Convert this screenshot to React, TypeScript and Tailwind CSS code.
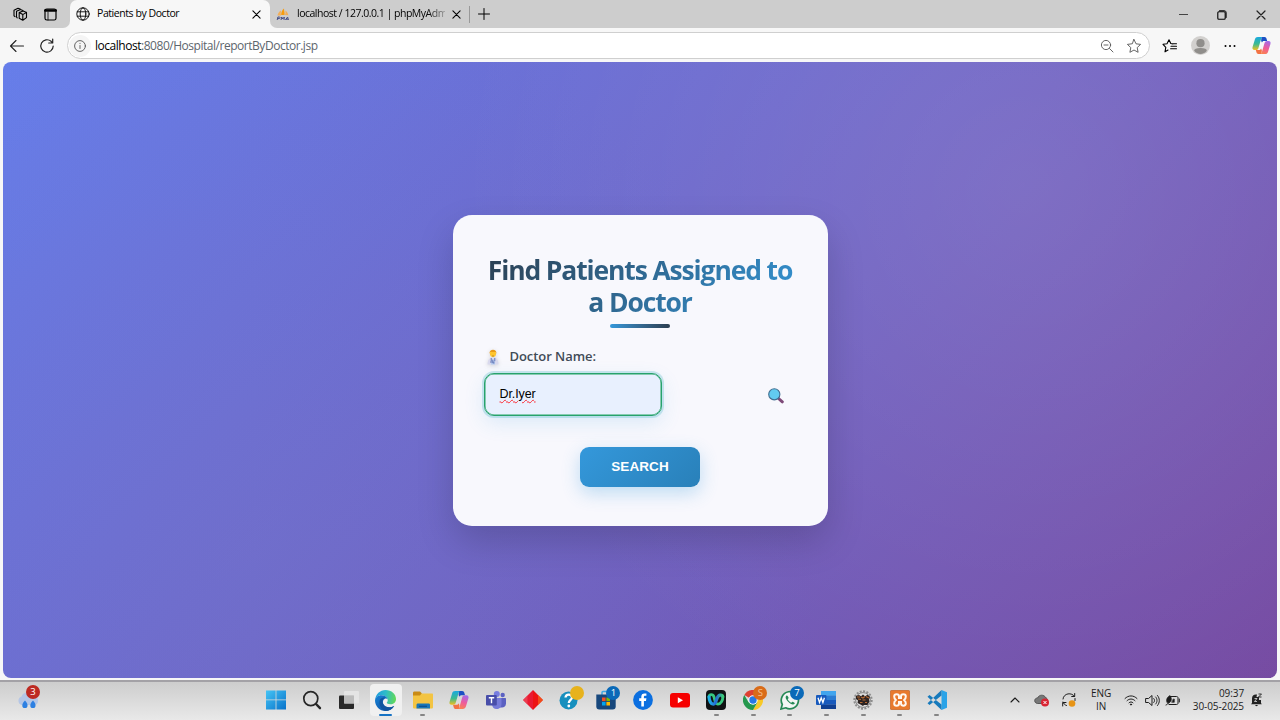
import React, { type ReactNode } from "react";

const stroke = { fill: "none", stroke: "currentColor", strokeLinecap: "round", strokeLinejoin: "round" } as const;

function CopilotLogo({ className }: { className: string }) {
  return (
    <svg viewBox="0 0 20 20" className={className}>
      <defs>
        <linearGradient id="cpA" x1="0" y1="0" x2="0" y2="1">
          <stop offset="0" stopColor="#18a8e0" />
          <stop offset=".55" stopColor="#3dbb8f" />
          <stop offset="1" stopColor="#f2c01d" />
        </linearGradient>
        <linearGradient id="cpB" x1=".6" y1="0" x2=".3" y2="1">
          <stop offset="0" stopColor="#a66be8" />
          <stop offset=".5" stopColor="#ee5b9c" />
          <stop offset="1" stopColor="#fb8350" />
        </linearGradient>
      </defs>
      <path d="M10 1h3.200c1.200 0 1.800.8 2.100 1.800L16 5.200h-3.400c-1.200 0-1.800.6-2.100 1.600L9.600 5z" fill="#1c50c4" />
      <path d="M10 19H6.800c-1.200 0-1.800-.8-2.100-1.800L4 14.800h3.400c1.200 0 1.800-.6 2.100-1.600l.9 1.800z" fill="#f37344" />
      <path d="M6.200 1h5.300c-1 0-1.500.7-1.800 1.600L6.800 12.600c-.4 1.400-1.100 2.200-2.600 2.200H2.600C.8 14.800.1 13.400.6 11.700L3.100 3.400C3.600 1.800 4.500 1 6.200 1z" fill="url(#cpA)" />
      <path d="M13.800 19H8.500c1 0 1.500-.7 1.800-1.600l2.900-10c.4-1.400 1.100-2.200 2.600-2.200h1.600c1.800 0 2.500 1.400 2 3.100l-2.500 8.300c-.5 1.600-1.400 2.400-3.100 2.400z" fill="url(#cpB)" />
    </svg>
  );
}

function CloseIcon({ className }: { className: string }) {
  return (
    <svg viewBox="0 0 10 10" className={className} {...stroke} strokeWidth="1.200">
      <path d="M1 1l8 8M9 1L1 9" />
    </svg>
  );
}

function TabStrip() {
  return (
    <header className="flex h-7 shrink-0 items-center bg-[#f7f7f7] text-black">
      <div className="flex h-7 w-[70px] items-center rounded-br-[7px] bg-[#cdcdcd] pl-[13px]">
        <svg viewBox="0 0 15 15" className="size-[15px]" {...stroke} strokeWidth="1.100">
          <path d="M6.200 5.600l4-1.700 3.300 1.500v5.200l-3.700 2.700-3.600-2zM6.200 5.600l3.600 2 3.700-2.200M9.800 7.600v5.700" />
          <path d="M4.200 10.800L3.500 10V4.300l4-1.800 2.300.9M2 9.600L1 8.800V3.200l4-1.900 2.200.8" />
        </svg>
        <svg viewBox="0 0 13 13" className="ml-4 size-[13px]" {...stroke} strokeWidth="1.200">
          <rect x="1" y="1" width="11" height="11" rx="1.800" />
          <path d="M1.200 2.500h10.600" strokeWidth="2.400" />
          <path d="M4 4v8" strokeWidth=".8" />
        </svg>
      </div>
      <div className="h-7 w-[200px] bg-[#cdcdcd]">
        <div className="flex h-7 items-center rounded-t-[7px] bg-[#f7f7f7]">
          <svg viewBox="0 0 14 14" className="ml-[6px] size-[14px]" {...stroke} strokeWidth=".9">
            <circle cx="7" cy="7" r="6.200" />
            <ellipse cx="7" cy="7" rx="2.800" ry="6.200" />
            <path d="M1.300 4.800h11.400M1.300 9.200h11.400" />
          </svg>
          <span className="ml-[7px] w-[155px] whitespace-nowrap text-[10.500px] tracking-[-0.44px]">Patients by Doctor</span>
          <CloseIcon className="size-[9px]" />
        </div>
      </div>
      <div className="flex h-7 flex-1 items-center rounded-bl-[7px] bg-[#cdcdcd] pl-[6px]">
        <svg viewBox="0 0 14 14" className="size-[14px]">
          <path d="M5.200 8C5 5.500 6 3 8 1.500c0 2.500 1 4.500.5 6.500z" fill="#f89c0e" />
          <path d="M1.500 8.500C2 6 3.300 4.500 5 3.500c-.4 2-.2 3.400 0 5zM9 8c.6-1.500.6-3 .4-4.500 1.800 1.200 2.600 3 3 4.700z" fill="#f3ae58" />
          <path d="M1.200 13l.7-3h1.400c1.200 0 1 1.600-.3 1.600H1.600M5 13l.7-3 1 2 1.600-2L8 13M9.400 13l2.200-3 .8 3M10 12.200h2.200" fill="none" stroke="#444d86" strokeWidth="1" />
        </svg>
        <span className="ml-[7px] w-[148px] whitespace-nowrap bg-linear-to-r from-black from-85% to-[#999] bg-clip-text text-[10.500px] tracking-[-0.49px] text-transparent">localhost / 127.0.0.1 | phpMyAdm</span>
        <CloseIcon className="ml-[7px] size-[9px]" />
        <div className="ml-[8px] h-[17px] w-px bg-[#999]" />
        <svg viewBox="0 0 12 12" className="ml-[8px] size-3" {...stroke} strokeWidth="1">
          <path d="M6 .5v11M.5 6h11" />
        </svg>
        <div className="ml-auto flex items-center pr-[14px]">
          <div className="h-px w-[9px] bg-[#444]" />
          <svg viewBox="0 0 10 10" className="ml-[29px] mt-px size-[10px]" {...stroke} strokeWidth="1.100">
            <rect x=".8" y="1.800" width="7.400" height="7.400" rx="1" />
            <path d="M2.500.7h4.700c1.200 0 2 .8 2 2v4.800" strokeWidth=".9" />
          </svg>
          <CloseIcon className="ml-[29px] mt-px size-[10px] text-[#222]" />
        </div>
      </div>
    </header>
  );
}

const starPath = "M8 1.500l2 4.300 4.600.6-3.400 3.200.9 4.700L8 12l-4.100 2.300.9-4.700L1.400 6.400 6 5.800z";

function AddressBar() {
  return (
    <div className="flex h-[34px] shrink-0 items-center bg-[#f7f7f7] pt-px pl-[9px] text-[#222]">
      <svg viewBox="0 0 16 14" className="h-[14px] w-4" {...stroke} strokeWidth="1.100">
        <path d="M14.500 7H1.500M7 1.500L1.500 7 7 12.500" />
      </svg>
      <svg viewBox="0 0 16 16" className="ml-[14px] size-4" {...stroke} strokeWidth="1.200">
        <path d="M14.200 8a6.200 6.200 0 1 1-2.100-4.700l1.500 1.500M13.700 1v4h-4" />
      </svg>
      <div className="ml-[12px] flex h-[27px] w-[1083px] items-center rounded-full border border-[#cfcfcf] bg-white pl-px">
        <div className="flex size-[22px] items-center justify-center rounded-full bg-[#f5f5f5]">
          <svg viewBox="0 0 12 12" className="size-3 text-[#555]" {...stroke} strokeWidth=".9">
            <circle cx="6" cy="6" r="5.400" />
            <path d="M6 5.500v3M6 3.300v.2" />
          </svg>
        </div>
        <span className="ml-[4px] whitespace-nowrap text-[12px] tracking-[-0.47px] text-[#5d666d]">
          <span className="text-black">localhost</span>:8080/Hospital/reportByDoctor.jsp
        </span>
        <svg viewBox="0 0 14 14" className="ml-auto size-[14px] text-[#555]" {...stroke} strokeWidth=".9">
          <circle cx="6" cy="6" r="4.600" />
          <path d="M9.500 9.500L13 13M4 6h4" />
        </svg>
        <svg viewBox="0 0 16 16" className="ml-[12px] mr-[7px] size-4 text-[#555]" {...stroke} strokeWidth=".9">
          <path d={starPath} />
        </svg>
      </div>
      <svg viewBox="0 0 16 16" className="ml-[12px] size-4 text-black" {...stroke} strokeWidth="1.100">
        <path d="M6 12L3 13.800l.8-4.500L1 6.300l4-.6 2-4 1.800 3.800L11 6M9 8.300h5.500M8.600 10.800h5.900M10 5.800h4.500" />
      </svg>
      <svg viewBox="0 0 18 18" className="ml-[13px] size-[19px]">
        <circle cx="9" cy="9" r="9" fill="#d2d0ce" />
        <circle cx="9" cy="6.800" r="3.900" fill="#908e8b" />
        <path d="M3 14c0-1.800 2-2.600 6-2.600s6 .8 6 2.600c-1.500 2-3.500 3-6 3s-4.500-1-6-3z" fill="#908e8b" />
      </svg>
      <svg viewBox="0 0 12 4" className="ml-[14px] h-1 w-3 fill-black">
        <circle cx="1.500" cy="2" r="1" /><circle cx="6" cy="2" r="1" /><circle cx="10.500" cy="2" r="1" />
      </svg>
      <CopilotLogo className="ml-[16px] size-[19px]" />
    </div>
  );
}

function DoctorIcon() {
  return (
    <svg viewBox="0 0 12 16" className="h-4 w-3 drop-shadow-sm">
      <path d="M.5 15.500c0-4 1.500-7 5.500-7s5.500 3 5.500 7z" fill="#d9d9ee" />
      <path d="M4 8.500l2 3 2-3v7H4z" fill="#b7cdf0" />
      <path d="M4.200 9v3.200M7.800 9v3.200M3 13h2.400M6.800 12.600v2M5.800 10.600v3.600" fill="none" stroke="#5665a8" strokeWidth=".8" />
      <circle cx="6" cy="4.800" r="3.100" fill="#ffc52d" />
      <path d="M2.600 4.800C2.200 2 4 .8 6 .8s3.800 1.200 3.400 4L8.600 3H3.400z" fill="#e99a18" />
      <path d="M5 7h2" stroke="#9a6518" strokeWidth=".6" />
    </svg>
  );
}

function SearchPanel() {
  return (
    <section className="mt-px flex h-[311px] w-[375px] flex-col items-center rounded-[19px] bg-[#f8f8fd] px-[30px] pt-[39px] shadow-[0_16px_36px_rgba(0,0,0,0.17)]">
      <h1 className="w-[315px] whitespace-nowrap bg-[linear-gradient(135deg,#2c3e50,#3498db)] bg-clip-text text-center text-[26.500px] leading-8 font-bold tracking-[-1.140px] text-transparent">
        Find Patients Assigned to<br />a Doctor
      </h1>
      <div className="mt-[6px] h-[3.500px] w-[60px] rounded-sm bg-linear-to-r from-[#3498db] to-[#2c3e50]" />
      <div className="mt-[19.500px] flex h-5 w-full items-center pl-[4px] text-[13px] font-semibold text-[#414b57]">
        <DoctorIcon />
        <label htmlFor="doctor" className="ml-[11px] tracking-[-0.06px]">Doctor Name:</label>
      </div>
      <div className="mt-[6px] flex w-full items-center pl-px">
        <div id="doctor" className="flex h-[43px] w-[178px] items-center rounded-[10px] border border-[#27a26c] bg-[#e8f0fe] px-[15px] font-['Liberation_Sans',sans-serif] text-[12.500px] tracking-[-0.1px] text-black shadow-[inset_0_0_0_0.5px_#27a567,0_0_0_2px_rgba(52,170,190,0.24),0_7px_20px_rgba(52,152,219,0.15)]">
          <span className="underline decoration-red-500 decoration-wavy decoration-[0.8px] underline-offset-[1px]">Dr.Iyer</span>
        </div>
        <svg viewBox="0 0 16 16" className="mt-[3px] ml-[106px] size-4">
          <path d="M10 10l4.300 3.800" stroke="#7e4a78" strokeWidth="3" strokeLinecap="round" />
          <circle cx="6.300" cy="6.300" r="5.600" fill="#62cbf0" stroke="#436f91" strokeWidth="1.100" />
        </svg>
      </div>
      <button className="mt-[31px] h-10 w-[120px] rounded-[9px] bg-[linear-gradient(135deg,#3498db,#2980b9)] font-['Liberation_Sans',sans-serif] text-[13.500px] font-bold tracking-[0.1px] text-white shadow-[0_6px_18px_rgba(52,152,219,0.3)]">SEARCH</button>
    </section>
  );
}

function Badge({ className, children }: { className: string; children?: ReactNode }) {
  return <span className={"absolute flex size-[14px] items-center justify-center rounded-full text-[9.500px] leading-none " + className}>{children}</span>;
}

const big = "size-5";

const apps: { name: string; icon: ReactNode; badge?: ReactNode; state?: "open" | "active" }[] = [
  {
    name: "start",
    icon: (
      <svg viewBox="0 0 20 20" className={big}>
        <defs><linearGradient id="win" x1="0" y1="0" x2="1" y2="1"><stop stopColor="#45c4f5" /><stop offset="1" stopColor="#0872ca" /></linearGradient></defs>
        <path d="M0 .5h9.600v9H0zM10.400.5H20v9h-9.600zM0 10.300h9.600v9.200H0zM10.400 10.300H20v9.200h-9.600z" fill="url(#win)" />
      </svg>
    ),
  },
  {
    name: "search",
    icon: (
      <svg viewBox="0 0 20 20" className={big} fill="none" stroke="#262626" strokeLinecap="round">
        <circle cx="8.800" cy="8.600" r="7" strokeWidth="1.700" /><path d="M14 14l4 4.200" strokeWidth="2.400" />
      </svg>
    ),
  },
  {
    name: "tasks",
    icon: (
      <svg viewBox="0 0 20 20" className={big}>
        <rect x="0" y="5.500" width="15" height="13.500" rx="1" fill="#292929" /><rect x="5" y="1" width="15" height="12.500" rx="1" fill="#e6e6e6" opacity=".85" /><rect x="5" y="5.500" width="10" height="8" fill="#bbb" />
      </svg>
    ),
  },
  {
    name: "edge",
    state: "active",
    icon: (
      <svg viewBox="0 0 20 20" className="size-[21px]">
        <defs>
          <linearGradient id="edT" x1="0" y1=".3" x2="1" y2=".4"><stop stopColor="#209be0" /><stop offset=".5" stopColor="#2ebcc8" /><stop offset="1" stopColor="#62d957" /></linearGradient>
          <linearGradient id="edB" x1="0" y1="0" x2="1" y2="1"><stop stopColor="#1783d6" /><stop offset="1" stopColor="#0c4a9d" /></linearGradient>
        </defs>
        <path d="M.1 9.500C.5 4 4.800 0 10 0c5.800 0 10 4 10 8.500 0 3.200-2.500 5-5.300 5-2.300 0-3.700-.8-3.500-1.600.8-.7 1-1.500.9-2.400C11.800 6.500 9 5 6 5 3 5 .8 7 .1 9.500z" fill="url(#edT)" />
        <path d="M0 10C.4 7 3 5 6 5c3 0 5.500 1.400 6 3.800C11 7.500 9 8 8 9.500c-2 4 2.500 8 7 7 1.300-.2 2.500-.8 3.300-1.200C16.600 18.300 13.500 20 10 20 4.500 20 0 15.500 0 10z" fill="url(#edB)" />
        <path d="M4.500 10C5.300 7.500 8 6.800 10 7.400 7.300 8 6.500 11 8 13.600c1.600 2.600 5.500 4 10.300 1.700-2 3.500-5 4.700-8.300 4.700-4.500-1.800-6.500-6-5.500-10z" fill="#10549f" />
      </svg>
    ),
  },
  {
    name: "files",
    state: "open",
    icon: (
      <svg viewBox="0 0 20 20" className={big}>
        <path d="M0 3c0-1 .5-1.500 1.500-1.500H7L9 3.500V7H0z" fill="#c98b16" />
        <path d="M0 5.500h7l1.500-2h10.500c.7 0 1 .4 1 1V17c0 1-.5 1.500-1.500 1.500h-17C.5 18.500 0 18 0 17z" fill="#f3c443" />
        <path d="M3.500 18.500V15c0-1 .6-1.500 1.500-1.500h10.500c1 0 1.500.5 1.500 1.500v3.500z" fill="#1876b9" /><path d="M6 16.300h8" stroke="#0d4f8d" strokeWidth="1.200" />
      </svg>
    ),
  },
  { name: "copilot", icon: <CopilotLogo className={big} /> },
  {
    name: "teams",
    icon: (
      <svg viewBox="0 0 20 20" className={big}>
        <circle cx="16.700" cy="5" r="2.200" fill="#5b61c2" /><circle cx="10.800" cy="4" r="3" fill="#777de0" />
        <path d="M13 8h6c.6 0 1 .4 1 1v4.500c0 2.500-2 4-4 4H13z" fill="#5b61c2" /><path d="M6 8h9.500v6c0 3-2.200 5-4.900 5S6 17 6 14z" fill="#767bd9" />
        <rect x="0" y="5" width="10.800" height="10.500" rx="1" fill="#484ea9" /><path d="M2.800 7.800h5.400M5.500 8v5.200" stroke="#fff" strokeWidth="1.400" />
      </svg>
    ),
  },
  {
    name: "diamond",
    icon: (
      <svg viewBox="0 0 20 20" className={big}>
        <path d="M10 0L0 10l10 10z" fill="#e91b32" /><path d="M10 0l10 10-10 10z" fill="#ed1313" /><path d="M15 5l5 5-5 5z" fill="#f35b1b" opacity=".8" /><path d="M4.500 5.500L0 10l4.500 4.500z" fill="#ed4c5d" opacity=".7" />
      </svg>
    ),
  },
  {
    name: "help",
    badge: <Badge className="top-[4px] right-[4px] bg-[#e7b21c]" />,
    icon: (
      <svg viewBox="0 0 20 20" className={big}>
        <circle cx="9.500" cy="10.500" r="9" fill="#168fbe" /><path d="M6.500 7.500c.4-4 6.500-3.500 6.500 0 0 2.300-3.200 2.500-3.200 5.500" fill="none" stroke="#fff" strokeWidth="2.300" /><circle cx="9.800" cy="16" r="1.400" fill="#fff" />
      </svg>
    ),
  },
  {
    name: "store",
    badge: <Badge className="top-[4px] right-[4px] bg-[#0a69b8] text-white">1</Badge>,
    icon: (
      <svg viewBox="0 0 20 20" className={big}>
        <path d="M6 5V2.500c0-.7.300-1 1-1h6c.7 0 1 .3 1 1V5" fill="none" stroke="#3da9e3" strokeWidth="1.500" />
        <path d="M.3 4.500h19.400v12c0 2-1 3-3 3H3.300c-2 0-3-1-3-3z" fill="#17477c" />
        <path d="M6 7.500h3.600v3.600H6z" fill="#f25022" /><path d="M10.400 7.500H14v3.600h-3.600z" fill="#7fba00" /><path d="M6 11.900h3.600v3.600H6z" fill="#00a4ef" /><path d="M10.400 11.900H14v3.600h-3.600z" fill="#ffb900" />
      </svg>
    ),
  },
  {
    name: "facebook",
    icon: (
      <svg viewBox="0 0 20 20" className={big}>
        <circle cx="10" cy="10" r="9.900" fill="#0b6fe0" /><path d="M8.300 16.500v-5.600H6.200V8.300h2.100V6.800c0-2.200 1.100-3.400 3.200-3.400.8 0 1.500.1 1.900.2v2.100h-1.200c-1 0-1.300.5-1.300 1.200v1.400h2.500l-.4 2.600h-2.100v5.600z" fill="#fff" />
      </svg>
    ),
  },
  {
    name: "youtube",
    icon: (
      <svg viewBox="0 0 20 20" className={big}><rect x="0" y="3" width="20" height="14.500" rx="3" fill="#f60000" /><path d="M7.800 7.300v6l5.200-3z" fill="#fff" /></svg>
    ),
  },
  {
    name: "webex",
    state: "open",
    icon: (
      <svg viewBox="0 0 20 20" className={big} fill="none" strokeLinecap="round">
        <defs><linearGradient id="wbx" x1="0" y1="0" x2="1" y2="0"><stop stopColor="#1fb6e8" /><stop offset=".5" stopColor="#2468d8" /><stop offset="1" stopColor="#3ccc78" /></linearGradient></defs>
        <rect width="20" height="20" rx="4" fill="#101214" />
        <path d="M3 6.800C3.500 4 7 4 8 7c.9 3 .8 7 3.800 7.200 3 .2 5.200-4 5-7.400" stroke="#38c87f" strokeWidth="2.800" />
        <path d="M3 6.800c.2 4 2 7.600 4.600 7.400 3.200-.3 2.400-8.400 6.300-9 1.500-.2 2.700.4 2.900 1.600" stroke="url(#wbx)" strokeWidth="3.200" />
      </svg>
    ),
  },
  {
    name: "chrome",
    state: "open",
    badge: <Badge className="top-[4px] right-[4px] bg-[#d96b19] text-[#f8c08f]">S</Badge>,
    icon: (
      <svg viewBox="0 0 20 20" className={big}>
        <path d="M10 10L1.300 5a10 10 0 0 1 17.400 0z" fill="#de4032" /><path d="M10 10H18.700V5A10 10 0 0 1 10 20l4.300-7.500z" fill="#f8c928" /><path d="M10 10l4.300 2.500L10 20A10 10 0 0 1 1.300 5l4.400 7.500z" fill="#24974d" />
        <circle cx="10" cy="10" r="4.700" fill="#fff" /><circle cx="10" cy="10" r="3.700" fill="#2678e4" />
      </svg>
    ),
  },
  {
    name: "whatsapp",
    state: "open",
    badge: <Badge className="top-[4px] right-[4px] bg-[#0a69b8] text-white">7</Badge>,
    icon: (
      <svg viewBox="0 0 20 20" className={big}>
        <path d="M1 19l1.300-4.600A8.600 8.600 0 1 1 5.700 17.800z" fill="#f3f6f4" stroke="#268955" strokeWidth="1.700" />
        <path d="M6.500 5.500c-2 2 0 4.500 2 6.500s4.700 3.400 6.300 1.500c.4-.6-2-2.200-2.500-1.800l-1 1c-1.200-.4-3.200-2.300-3.600-3.500l.8-1C9 7.500 7.200 4.800 6.500 5.500z" fill="#268955" />
      </svg>
    ),
  },
  {
    name: "word",
    state: "open",
    icon: (
      <svg viewBox="0 0 20 20" className={big}>
        <path d="M5 1h15v4.800H5z" fill="#41a5ee" /><path d="M5 5.500h15V10H5z" fill="#2b7cd3" /><path d="M5 10h15v4.700H5z" fill="#185abd" /><path d="M5 14.500h15V19H5z" fill="#103f91" />
        <rect y="5" width="10.500" height="10" rx="1" fill="#185abd" /><path d="M2 7.700l1.500 4.800 1.700-4.600 1.700 4.600 1.500-4.800" fill="none" stroke="#fff" strokeWidth="1.300" />
      </svg>
    ),
  },
  {
    name: "gear",
    state: "open",
    icon: (
      <svg viewBox="0 0 20 20" className={big}>
        <circle cx="10" cy="10" r="8.700" fill="none" stroke="#8d8d8d" strokeWidth="2" strokeDasharray="2 1.400" /><circle cx="10" cy="10" r="7.400" fill="#dedede" stroke="#858585" />
        <path d="M3 6l3-1 2 1.300L10 4.500l2 1.700 2.500-1.500L17 7l-1 2.500.5 2-2 3.500H11l-1 1-2.500-1.500-3-1.500.5-2.500L3 9z" fill="#2d2422" />
        <path d="M4 7h3M8 7l2 1 2-1.500M13 6.500l3 1.500M5 9l3 .5M9.500 10h3M7 12.500h2.500M12 12.500h2" fill="none" stroke="#b76a34" strokeWidth="1.100" />
      </svg>
    ),
  },
  {
    name: "xampp",
    state: "open",
    icon: (
      <svg viewBox="0 0 20 20" className={big}>
        <rect x=".3" y=".3" width="19.400" height="19.400" rx="1.500" fill="#e8792d" stroke="#b75b21" strokeWidth=".6" />
        <path d="M4.200 6.500c0-3 4.800-3 4.800 0V8h2V6.500c0-3 4.800-3 4.800 0S14 9.800 14 10s1.800.8 1.800 3.500-4.800 3-4.800 0V12H9v1.500c0 3-4.800 3-4.800 0S6 10.200 6 10 4.200 9.300 4.200 6.500z" fill="none" stroke="#fff7f0" strokeWidth="2" />
      </svg>
    ),
  },
  {
    name: "vscode",
    state: "open",
    icon: (
      <svg viewBox="0 0 20 20" className={big}>
        <path d="M14.500 0L20 2.300v15.400L14.500 20z" fill="#2aa3e8" /><path d="M14.500 0v5.500L2.500 15 .5 13.300zM14.500 20v-5.500L2.500 5 .5 6.700z" fill="#177abc" />
      </svg>
    ),
  },
];

function Taskbar() {
  return (
    <footer className="flex h-10 shrink-0 items-start border-t-2 border-[#a3a1a6] bg-linear-to-b from-[#cdcdcd] to-[#e9e9e9] text-[#1c1c1c]">
      <div className="flex h-9 w-[257.300px] items-center pl-[17px]">
        <div className="relative size-6">
          <svg viewBox="0 0 24 24" className="size-6">
            <path d="M4.500 17a4.500 4.500 0 0 1 0-8.500C6 4 12 3 14.500 7c4 0 6.500 2 6.500 5.500S19 17 17 17z" fill="#b4c6e6" />
            <path d="M8 12.500c2 2 2.500 3.500 2.500 5a2.600 2.600 0 0 1-5.200 0c0-1.500 1-3.500 2.700-5zM16 12.500c2 2 2.500 3.500 2.500 5a2.600 2.600 0 0 1-5.200 0c0-1.500 1-3.500 2.700-5z" fill="#2d80e2" />
          </svg>
          <Badge className="-top-[3px] right-[1px] bg-[#bd2a23] text-white">3</Badge>
        </div>
      </div>
      {apps.map((app) => (
        <div key={app.name} className="relative flex h-9 w-[36.720px] shrink-0 items-center justify-center">
          <div className={app.state === "active" ? "flex h-8 w-8 items-center justify-center rounded-[4px] bg-[#f0f0f0]" : "flex h-8 w-8 items-center justify-center"}>
            {app.icon}
          </div>
          {app.badge}
          {app.state === "active" && <span className="absolute bottom-[2px] h-[2.500px] w-[13px] rounded-full bg-[#1672c4]" />}
          {app.state === "open" && <span className="absolute bottom-[2px] h-[2.500px] w-[5px] rounded-full bg-[#858585]" />}
        </div>
      ))}
      <div className="ml-auto flex h-9 items-center pr-[17px] text-[10px] leading-[13px]">
        <svg viewBox="0 0 10 6" className="h-[6px] w-[10px]" {...stroke} strokeWidth="1.100"><path d="M1 5l4-4 4 4" /></svg>
        <svg viewBox="0 0 16 14" className="ml-[14px] h-[14px] w-4">
          <path d="M3.500 10.500c-4-.5-3.500-5.500 0-5.500C5 1.500 10 1 12 5c2 0 2 5.500-1 5.500z" fill="#777" stroke="#444" strokeWidth=".8" />
          <circle cx="11" cy="9.500" r="4" fill="#d92433" /><path d="M9.500 8l3 3m0-3l-3 3" stroke="#fff" />
        </svg>
        <svg viewBox="0 0 16 16" className="ml-[11px] size-4" {...stroke} strokeWidth="1">
          <path d="M2 7c.5-6 9-7 11.500-2.500M13.700 1.500v3h-3M2 10c.5 1.500 1.700 3 3.500 3.500M1.700 14v-3.500H5M14 6.500v2" />
          <circle cx="11" cy="11.500" r="3.300" fill="#e79416" stroke="none" />
        </svg>
        <div className="ml-[14px] w-5 text-center tracking-[-0.1px]">ENG<br />IN</div>
        <svg viewBox="0 0 14 12" className="ml-[13px] h-3 w-[14px]" {...stroke} strokeWidth="1">
          <path d="M1 4.500c3.500-3.500 8.500-3.500 12 0M3 6.700c2.300-2.300 5.700-2.300 8 0M5 8.800c1.200-1.200 2.800-1.200 4 0" /><circle cx="7" cy="10.500" r=".6" fill="currentColor" />
        </svg>
        <svg viewBox="0 0 15 13" className="ml-[7px] h-[13px] w-[15px]" {...stroke} strokeWidth="1">
          <path d="M1 4.500h2.500L7 1.500v10L3.500 8.500H1zM8.800 4.500c1 1 1 3 0 4M10.700 3c1.800 2 1.800 5 0 7M12.500 1.500c2.500 3 2.500 7 0 10" />
        </svg>
        <svg viewBox="0 0 15 13" className="ml-[5px] h-[13px] w-[15px]" {...stroke} strokeWidth="1">
          <path d="M5 2.500h6.500c1 0 1.500.5 1.500 1.500v5c0 1-.5 1.500-1.500 1.500H4M14.300 5v3M1 11c1.500-.5 2-1.500 3-2.500" />
          <path d="M2 8.500C.5 5 3 2.500 5 1.500c2 2.500 2 6-1 7.500zM8.500 5h.8v3.300H7z" fill="currentColor" strokeWidth=".6" />
        </svg>
        <div className="ml-[10px] w-[54px] whitespace-nowrap text-right tracking-[-0.1px]">09:37<br />30-05-2025</div>
        <svg viewBox="0 0 13 14" className="ml-[6px] h-[14px] w-[13px]">
          <path d="M2 10V5.500C2 2.500 4 1 7 1.500L6.500 4H9v3h2v3l.8 1.200H1zM5 12h3c-.5 1.500-2.500 1.500-3 0z" fill="#222" />
          <path d="M8.500 1h3l-3 3h3" fill="none" stroke="#222" strokeWidth=".9" /><path d="M4.500 5.500H7l-2.500 3H7" fill="none" stroke="#ddd" strokeWidth=".8" />
        </svg>
      </div>
    </footer>
  );
}

export default function App() {
  return (
    <div className="flex h-[720px] w-[1280px] flex-col overflow-hidden bg-[#f7f7f7] font-['Open_Sans',sans-serif]">
      <TabStrip />
      <AddressBar />
      <main className="mx-[3px] mb-[2px] flex min-h-0 flex-1 items-center justify-center rounded-lg bg-[radial-gradient(circle_at_20%_80%,rgba(120,119,198,0.3)_0%,transparent_50%),radial-gradient(circle_at_80%_20%,rgba(255,255,255,0.1)_0%,transparent_50%),linear-gradient(135deg,#667eea_0%,#764ba2_100%)]">
        <SearchPanel />
      </main>
      <Taskbar />
    </div>
  );
}
